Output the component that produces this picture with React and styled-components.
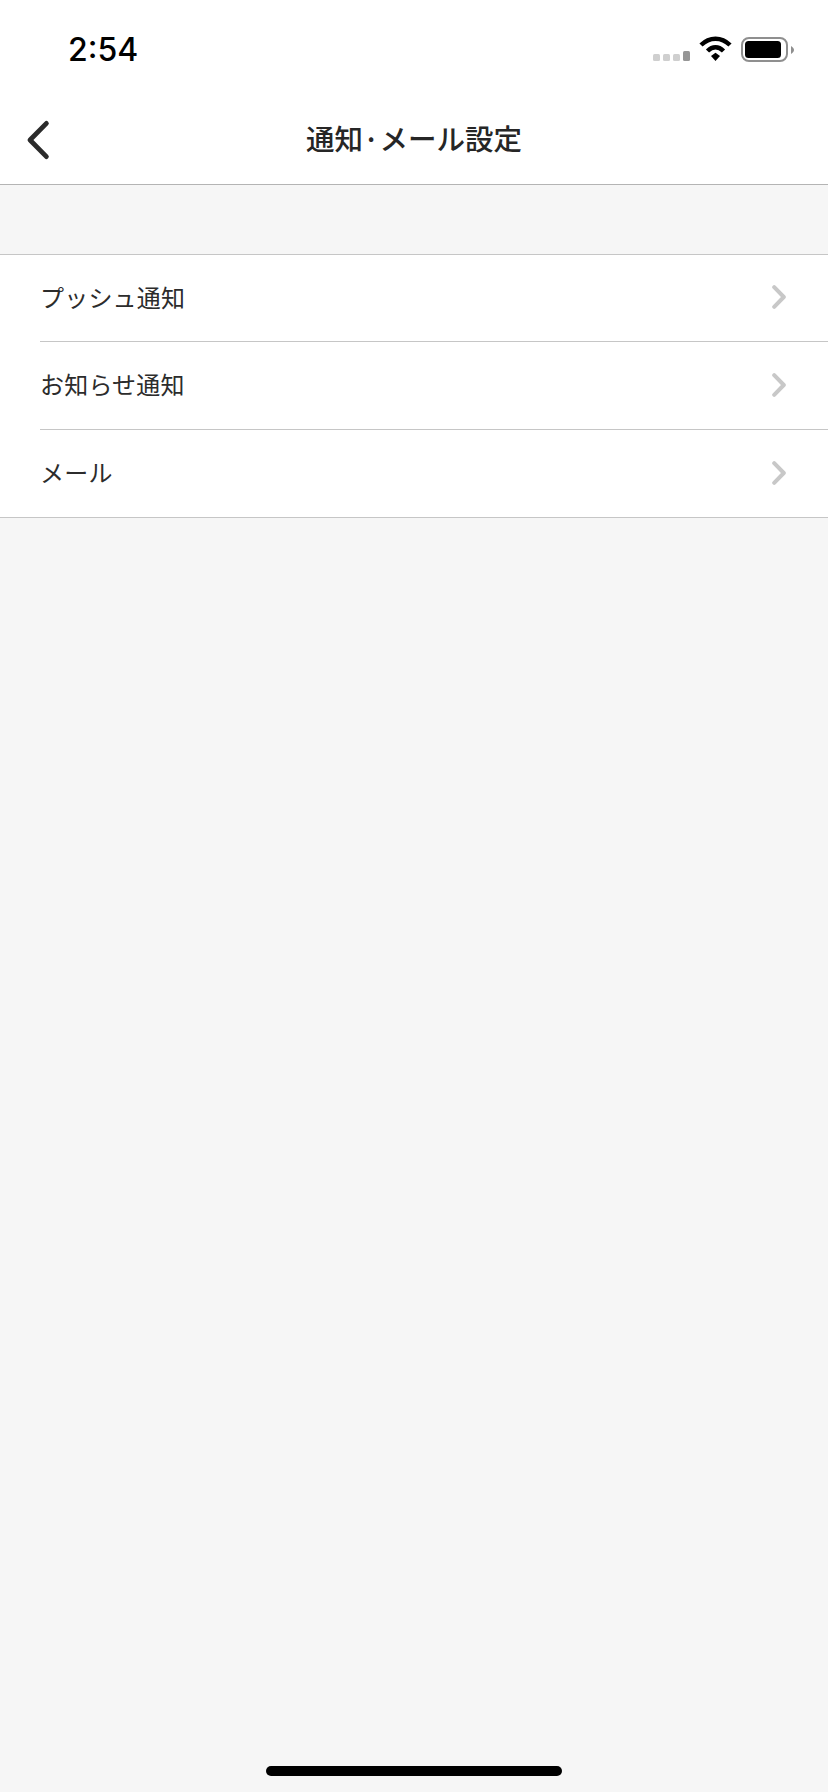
import React from "react";
import styled, { createGlobalStyle } from "styled-components";

const Global = createGlobalStyle`
  html, body { margin: 0; padding: 0; background: #f6f6f6; }
  * { box-sizing: border-box; }
`;

const Page = styled.div`
  position: relative;
  width: 828px;
  height: 1792px;
  background: #f6f6f6;
  font-family: "Noto Sans CJK JP", "Noto Sans", sans-serif;
  overflow: hidden;
`;

const StatusBar = styled.div`
  height: 88px;
  background: #fff;
  display: flex;
  justify-content: space-between;
  align-items: flex-start;
  padding: 30px 32px 0 68px;
`;

const Time = styled.div`
  font-family: Inter, "Liberation Sans", sans-serif;
  font-size: 32px;
  font-weight: 500;
  line-height: 40px;
  color: #000;
`;

const StatusIcons = styled.svg`
  display: block;
  width: 148px;
  height: 36px;
`;

const NavBar = styled.header`
  height: 97px;
  background: #fff;
  border-bottom: 1px solid #b4b4b4;
  display: flex;
  align-items: center;
  justify-content: center;
  position: relative;
`;

const BackIcon = styled.svg`
  position: absolute;
  left: 24px;
  top: 31px;
  width: 30px;
  height: 42px;
`;

const Title = styled.h1`
  margin: 0 0 -4px;
  font-size: 28.5px;
  font-weight: 500;
  color: #262626;
  line-height: 40px;
`;

const List = styled.ul`
  list-style: none;
  margin: 69px 0 0;
  padding: 0;
  background: #fff;
  border-top: 1px solid #c6c6c6;
  border-bottom: 1px solid #c6c6c6;
`;

const Row = styled.li`
  margin-left: 40px;
  height: ${(p) => (p.$edge ? "87px" : "88px")};
  padding-right: 42px;
  display: flex;
  align-items: center;
  justify-content: space-between;
  border-bottom: ${(p) => (p.$last ? "none" : "1px solid #c6c6c6")};
  font-size: 24px;
  font-weight: 400;
  letter-spacing: 0.2px;
  color: #2c2c2c;
`;

const RowLabel = styled.span`
  line-height: 30px;
  margin-top: -3px;
`;

const Chevron = styled.svg`
  width: 14px;
  height: 24px;
  flex: none;
  margin-top: -2px;
`;

const HomeBar = styled.div`
  position: absolute;
  left: 266px;
  top: 1766px;
  width: 296px;
  height: 10px;
  border-radius: 5px;
  background: #000;
`;

const rows = ["プッシュ通知", "お知らせ通知", "メール"];

export default function App() {
  return (
    <Page>
      <Global />
      <StatusBar>
        <Time>2:54</Time>
        <StatusIcons viewBox="0 0 148 36">
          <rect x="5" y="24" width="7" height="7" rx="1.5" fill="#cfcfcf" />
          <rect x="15" y="24" width="7" height="7" rx="1.5" fill="#cfcfcf" />
          <rect x="25" y="24" width="7" height="7" rx="1.5" fill="#cfcfcf" />
          <rect x="35" y="21" width="7" height="10" rx="1.5" fill="#969696" />
          <path d="M53 15 C61.5 6.5 73.5 6.5 82 15" fill="none" stroke="#000" strokeWidth="4.5" />
          <path d="M59.5 21 C64.5 16 70.5 16 75.5 21" fill="none" stroke="#000" strokeWidth="4.5" />
          <path d="M63 26 L67.5 22.8 L72 26 L67.5 31 Z" fill="#000" />
          <rect x="94" y="8" width="45" height="23" rx="7" fill="none" stroke="#8f8f8f" strokeWidth="2" />
          <rect x="97" y="11" width="36" height="17" rx="3.5" fill="#000" />
          <path d="M143 16 C145 17 146 19 146 20 C146 21 145 23 143 24 Z" fill="#8f8f8f" />
        </StatusIcons>
      </StatusBar>
      <NavBar>
        <BackIcon viewBox="0 0 30 42">
          <path d="M22.4 4.4 L6 21 L22.4 37.6" fill="none" stroke="#2b2b2b" strokeWidth="4.8" strokeLinecap="round" strokeLinejoin="round" />
        </BackIcon>
        <Title>通知·メール設定</Title>
      </NavBar>
      <List>
        {rows.map((r, i) => (
          <Row key={r} $edge={i === 0 || i === rows.length - 1} $last={i === rows.length - 1}>
            <RowLabel>{r}</RowLabel>
            <Chevron viewBox="0 0 14 24">
              <path d="M2.2 2.2 L11.8 12 L2.2 21.8" fill="none" stroke="#c8c8c8" strokeWidth="4" strokeLinecap="round" strokeLinejoin="round" />
            </Chevron>
          </Row>
        ))}
      </List>
      <HomeBar />
    </Page>
  );
}
